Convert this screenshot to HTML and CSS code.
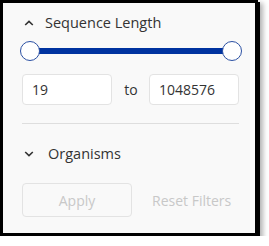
FILE: index.html
```html
<!doctype html>
<html>
  <head>
    <title>Filters</title>
    <link rel="stylesheet" href="styles.css">
  </head>
  <body>
    <div class="panel">
      <div class="section-header">
        <svg class="chevron" width="10" height="6" viewBox="0 0 10 6">
          <path d="M1.2 5 L5 1.4 L8.8 5" />
        </svg>
        <span class="section-title">Sequence Length</span>
      </div>

      <div class="slider">
        <div class="thumb"></div>
        <div class="track"></div>
        <div class="thumb"></div>
      </div>

      <div class="range-row">
        <div class="range-input">19</div>
        <span class="range-to">to</span>
        <div class="range-input">1048576</div>
      </div>

      <div class="divider"></div>

      <div class="section-header collapsed">
        <svg class="chevron" width="10" height="6" viewBox="0 0 10 6">
          <path d="M1.2 1 L5 4.6 L8.8 1" />
        </svg>
        <span class="section-title">Organisms</span>
      </div>

      <div class="actions">
        <button class="button" disabled>Apply</button>
        <span class="reset">Reset Filters</span>
      </div>
    </div>
  </body>
</html>
```

FILE: styles.css
```css
* {
  box-sizing: border-box;
  margin: 0;
  padding: 0;
}

body {
  background: #fff;
  font-family: 'Open Sans', 'Noto Sans', sans-serif;
  font-size: 14px;
  color: #333;
}

.panel {
  width: 258px;
  height: 236px;
  border: 3px solid #000;
  box-shadow: 2px 2px 0 #000, 4px 4px 5px 1px rgba(0, 0, 0, 0.3);
  background: #f9f9f9;
  padding: 9px 16px 0 19px;
}

.section-header {
  display: flex;
  align-items: center;
  height: 22px;
  font-size: 14.5px;
  line-height: 22px;
}

.chevron {
  margin-left: 2px;
  margin-right: 11px;
  fill: none;
  stroke: #333;
  stroke-width: 1.6;
}
.collapsed {
  margin-top: 19px;
}
.collapsed .chevron {
  margin-right: 14px;
}

.slider {
  display: flex;
  align-items: center;
  margin: 7px -3px 0 -2px;
  height: 20px;
}
.thumb {
  width: 20px;
  height: 20px;
  border-radius: 50%;
  border: 1.5px solid #2b50a3;
  background: #fff;
  position: relative;
  z-index: 1;
}
.track {
  flex: 1;
  height: 6px;
  margin: 0 -10px;
  background: #0033a0;
}

.range-row {
  display: flex;
  align-items: center;
  justify-content: space-between;
  margin-top: 13px;
}
.range-input {
  width: 90px;
  height: 31px;
  border: 1px solid #e3e3e3;
  border-radius: 4px;
  background: #fff;
  padding-left: 9px;
  line-height: 29px;
}
.range-to {
  margin-left: 1px;
}

.divider {
  height: 1px;
  background: #dedede;
  margin-top: 18px;
}

.actions {
  display: flex;
  align-items: center;
  margin-top: 18px;
}
.button {
  width: 110px;
  height: 34px;
  border: 1px solid #e3e3e3;
  border-radius: 4px;
  background: #f9f9f9;
  color: #c8c8c8;
  font-family: inherit;
  font-size: 14px;
}
.reset {
  margin-left: 20px;
  color: #c8c8c8;
}
```
